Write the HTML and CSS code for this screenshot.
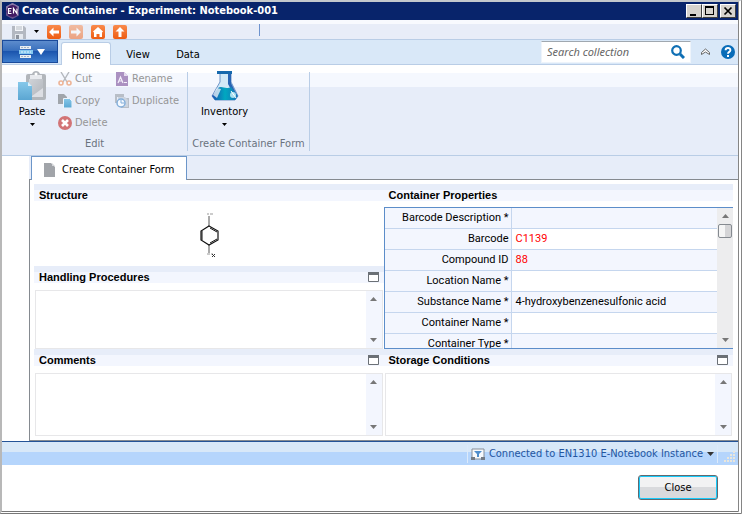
FILE: index.html
```html
<!DOCTYPE html>
<html lang="en">
<head>
<meta charset="utf-8">
<title>Create Container - Experiment: Notebook-001</title>
<link rel="stylesheet" href="styles.css">
</head>
<body>
<svg class="defs" aria-hidden="true">
  <defs>
    <linearGradient id="orange" x1="0" y1="0" x2="0" y2="1"><stop offset="0" stop-color="#f98a4c"/><stop offset="1" stop-color="#ee5c12"/></linearGradient>
    <linearGradient id="sheet" x1="0" y1="0" x2="0" y2="1"><stop offset="0" stop-color="#86c8ea"/><stop offset="1" stop-color="#5ba6d2"/></linearGradient>
    <linearGradient id="board" x1="0" y1="0" x2="1" y2="1"><stop offset="0" stop-color="#d0d3d8"/><stop offset="1" stop-color="#b2b6bc"/></linearGradient>
    <linearGradient id="liquid" x1="0" y1="0" x2="1" y2="0"><stop offset="0" stop-color="#1c50b0"/><stop offset=".5" stop-color="#00a8c0"/><stop offset="1" stop-color="#1870b8"/></linearGradient>
    <symbol id="up" viewBox="0 0 7 4"><path d="M0 4 3.5 0 7 4z"/></symbol>
    <symbol id="down" viewBox="0 0 7 4"><path d="M0 0h7L3.500 4z"/></symbol>
    <symbol id="restore" viewBox="0 0 11 10"><path d="M.5.500h10v9H.5z" fill="#fff" stroke="#6b7076"/><path d="M0 0h11v3H0z" fill="#6b7076"/></symbol>
  </defs>
</svg>
<div class="window">
  <header class="titlebar">
    <svg class="logo" viewBox="0 0 15 16" aria-hidden="true"><path d="M7.500 0 14 3.500v9L7.500 16 1 12.500v-9z" fill="#67548f"/><path d="M7.500 0 14 3.500v4.500H1V3.500z" fill="#8a7aaa"/><circle cx="7.500" cy="8" r="6" fill="#421a63"/><path d="M6.500 5.500h-3v5h3M3.500 8h2.500M8.500 10.500v-5l3.500 5v-5" fill="none" stroke="#fff" stroke-width="1.200"/></svg>
    <h1>Create Container - Experiment: Notebook-001</h1>
    <div class="caption">
      <button type="button" aria-label="Minimize"><svg viewBox="0 0 14 12"><path d="M3 9h6v2H3z"/></svg></button>
      <button type="button" aria-label="Maximize"><svg viewBox="0 0 14 12"><path d="M2 1h9v9H2zM3 3v6h7V3z" fill-rule="evenodd"/></svg></button>
      <button type="button" class="close-x" aria-label="Close window"><svg viewBox="0 0 14 12"><path d="m3.500 2.500 7 7m0-7-7 7" stroke="#000" stroke-width="1.700"/></svg></button>
    </div>
  </header>

  <div class="quickbar">
    <button type="button" aria-label="Save"><svg class="i14" viewBox="0 0 14 14"><path d="M0 1h12l2 2v11H0z" fill="#b3b8c1"/><path d="M3 0h8v6H3z" fill="#f4f6fa"/><path d="M4 2h6M4 4h6" stroke="#b4bac2"/><path d="M3 9h8v5H3z" fill="#e4e8ee"/><path d="M4 10h3v4H4z" fill="#8e949e"/></svg></button>
    <button type="button" class="drop" aria-label="Save options"><svg viewBox="0 0 5 3"><path d="M0 0h5L2.500 3z"/></svg></button>
    <button type="button" aria-label="Back"><svg class="i14" viewBox="0 0 14 14"><rect width="14" height="14" rx="2" fill="url(#orange)"/><path d="M2 7l4.500-4.500V5.500H12v3H6.500v3z" fill="#fff"/></svg></button>
    <button type="button" aria-label="Forward" class="faded"><svg class="i14" viewBox="0 0 14 14"><rect width="14" height="14" rx="2" fill="url(#orange)"/><path d="M12 7 7.500 2.500V5.500H2v3h5.500v3z" fill="#fff"/></svg></button>
    <button type="button" aria-label="Home"><svg class="i14" viewBox="0 0 14 14"><rect width="14" height="14" rx="2" fill="url(#orange)"/><path d="M7 2l5 4.500-1 1V12H8.500V9h-3v3H3V7.500l-1-1z" fill="#fff"/></svg></button>
    <button type="button" aria-label="Up"><svg class="i14" viewBox="0 0 14 14"><rect width="14" height="14" rx="2" fill="url(#orange)"/><path d="M7 2l4.500 4.500H8.500V12h-3V6.500h-3z" fill="#fff"/></svg></button>
    <span class="grip"></span>
  </div>

  <nav class="tabs">
    <button type="button" class="appmenu" aria-label="Application menu">
      <svg class="appicon" viewBox="0 0 14 12"><path d="M1 0h11v3H1zM1 9h11v3H1z" fill="#e8edf2"/><path d="M2 1.500h9M2 10.500h9" stroke="#a4b4c4" stroke-dasharray="2 1"/><path d="M0 4h14v4H0z" fill="#86c8f0"/><path d="M2 6h10" stroke="#e4f5ff" stroke-dasharray="2 1"/></svg>
      <svg class="apparrow" viewBox="0 0 8 6"><path d="M0 0h8L4 6z" fill="#fff"/></svg>
    </button>
    <button type="button" class="tab active">Home</button>
    <button type="button" class="tab">View</button>
    <button type="button" class="tab">Data</button>
    <div class="tools">
      <div class="search">
        <input type="text" placeholder="Search collection" aria-label="Search collection">
        <button type="button" aria-label="Search"><svg viewBox="0 0 14 14"><circle cx="5.500" cy="5.500" r="4.300" fill="#fff" stroke="#0f6fb4" stroke-width="2.200"/><path d="m9 9 4 4" stroke="#0f6fb4" stroke-width="3"/></svg></button>
      </div>
      <button type="button" class="collapse" aria-label="Collapse ribbon"><svg viewBox="0 0 9 8"><path d="M.5 4.500 4.500 1l4 3.500v2L4.500 4 .5 6.500z" fill="#fff" stroke="#666"/></svg></button>
      <button type="button" class="help" aria-label="Help"><svg viewBox="0 0 14 14"><circle cx="7" cy="7" r="7" fill="#086cb8"/><path d="M4.600 5.300C4.600 2.300 9.400 2.300 9.400 5.200 9.400 7 7 6.800 7 8.800" fill="none" stroke="#fff" stroke-width="1.900"/><path d="M6 10h2v2H6z" fill="#fff"/></svg></button>
    </div>
  </nav>

  <div class="ribbon">
    <section class="group edit">
      <div class="commands">
        <button type="button" class="big">
          <svg viewBox="0 0 28 30"><path d="M10 3h4q1-3 4-3t4 3h4q2 0 2 2v22q0 2-2 2H10q-2 0-2-2V5q0-2 2-2z" fill="#b2b6bb"/><path d="M11 8h14v18H11z" fill="#dcdee3"/><path d="M11 8h14v9L14 25h-3z" fill="url(#board)"/><path d="M12 4h12v4H12z" fill="#e8eaee"/><circle cx="18" cy="3" r="1.500" fill="#fff"/><path d="M0 11h10l4 4v14H0z" fill="url(#sheet)"/><path d="M10 11v4h4z" fill="#dcf0fa"/></svg>
          <span>Paste</span>
          <svg class="caret" viewBox="0 0 5 3"><path d="M0 0h5L2.500 3z"/></svg>
        </button>
        <div class="column first">
          <button type="button" disabled><svg viewBox="0 0 14 14"><path d="m3 0 6 10M11 0 5 10" stroke="#b4b8bd" stroke-width="1.400"/><circle cx="3" cy="11" r="2" fill="none" stroke="#edb497" stroke-width="1.600"/><circle cx="11" cy="11" r="2" fill="none" stroke="#edb497" stroke-width="1.600"/></svg>Cut</button>
          <button type="button" disabled><svg viewBox="0 0 14 14"><path d="M0 0h6l3 3v7H0z" fill="#a0a5ab"/><path d="M5.500 4.500h6l2.500 2.500v7H5.500z" fill="url(#sheet)" stroke="#edf4fb"/></svg>Copy</button>
          <button type="button" disabled><svg viewBox="0 0 14 14"><circle cx="7" cy="7" r="7" fill="#d27476"/><path d="m4 4 6 6m0-6-6 6" stroke="#fff" stroke-width="2.600"/></svg>Delete</button>
        </div>
        <div class="column">
          <button type="button" disabled><svg viewBox="0 0 14 14"><path d="M1 0h8l4 4v10H1z" fill="#ab91c1"/><path d="M9 0v4h4z" fill="#e5dced"/><path d="m3 11 2.500-6L8 11M4 9h3M9 10.500h3" fill="none" stroke="#f4effa" stroke-width="1.200"/></svg>Rename</button>
          <button type="button" disabled><svg viewBox="0 0 14 14"><path d="M0 0h9v3H2v6H0zM9 4h5v10H6V11h5z" fill="#b8bec7"/><path d="M3 3h7l3 3v7H3z" fill="#ccd4df"/><circle cx="6" cy="9" r="4" fill="#f4f9ff" stroke="#83aeda" stroke-width="1.500"/><path d="M6 6v3h3" fill="none" stroke="#83aeda"/></svg>Duplicate</button>
        </div>
      </div>
      <h2>Edit</h2>
    </section>
    <section class="group form">
      <div class="commands">
        <button type="button" class="big">
          <svg viewBox="0 0 28 30"><path d="M9 2h11v9l7 14-3 4H4l-3-4 8-14z" fill="#d2e9f7" stroke="#6d94c8"/><path d="M6 0h15v3H6z" fill="#1669ad"/><path d="M17 3h3v9l6 12-2 2-7-13z" fill="#2865b4"/><path d="M7 17c4-3 7 2 13-1l7 9-3 4H4l-3-4z" fill="url(#liquid)"/><path d="m2 24 4-7 4 1-4 9z" fill="#fff" opacity=".7"/><circle cx="22" cy="24" r="3" fill="#a9e0f0"/><path d="m20 20 5 7" stroke="#fff"/></svg>
          <span>Inventory</span>
          <svg class="caret" viewBox="0 0 5 3"><path d="M0 0h5L2.500 3z"/></svg>
        </button>
      </div>
      <h2>Create Container Form</h2>
    </section>
  </div>

  <main class="workspace">
    <div class="doctabs">
      <button type="button" class="doctab"><svg viewBox="0 0 11 14"><path d="M0 0h7l4 4v10H0z" fill="#a1a4a9"/><path d="M8 0v3h3z" fill="#d5d7da"/></svg>Create Container Form</button>
    </div>
    <div class="sheet">
      <div class="left">
        <section class="panel structure">
          <h3>Structure</h3>
          <svg class="molecule" viewBox="0 0 24 50" role="img" aria-label="4-hydroxybenzenesulfonic acid"><path d="M12 5v10M12 34v8" stroke="#555"/><path d="m12 15 9 5v9l-9 5-8-5v-9z" fill="none" stroke="#111" stroke-width="1.200"/><path d="m13 17 7 4M5 20v9M13 32l7-4" stroke="#111"/><path d="M10 3h2M13 3h3M10 43h3M14 43h2" stroke="#999"/><path d="m15 43 3 3m0-3-3 3" stroke="#333"/></svg>
        </section>
        <section class="panel">
          <h3><label for="handling">Handling Procedures</label><button type="button" aria-label="Expand Handling Procedures"><svg><use href="#restore"/></svg></button></h3>
          <div class="memo"><textarea id="handling"></textarea><span class="scroll"><svg><use href="#up"/></svg><svg><use href="#down"/></svg></span></div>
        </section>
      </div>
      <section class="panel properties">
        <h3>Container Properties</h3>
        <div class="gridbox">
          <div class="rows">
            <table>
              <tr><th scope="row">Barcode Description *</th><td></td></tr>
              <tr><th scope="row">Barcode</th><td class="auto">C1139</td></tr>
              <tr><th scope="row">Compound ID</th><td class="auto">88</td></tr>
              <tr><th scope="row">Location Name *</th><td></td></tr>
              <tr><th scope="row">Substance Name *</th><td>4-hydroxybenzenesulfonic acid</td></tr>
              <tr><th scope="row">Container Name *</th><td></td></tr>
              <tr><th scope="row">Container Type *</th><td></td></tr>
            </table>
          </div>
          <span class="scroll"><svg><use href="#up"/></svg><i class="thumb"></i><svg><use href="#down"/></svg></span>
        </div>
      </section>
      <section class="panel">
        <h3><label for="comments">Comments</label><button type="button" aria-label="Expand Comments"><svg><use href="#restore"/></svg></button></h3>
        <div class="memo"><textarea id="comments"></textarea><span class="scroll"><svg><use href="#up"/></svg><svg><use href="#down"/></svg></span></div>
      </section>
      <section class="panel">
        <h3><label for="storage">Storage Conditions</label><button type="button" aria-label="Expand Storage Conditions"><svg><use href="#restore"/></svg></button></h3>
        <div class="memo"><textarea id="storage"></textarea><span class="scroll"><svg><use href="#up"/></svg><svg><use href="#down"/></svg></span></div>
      </section>
    </div>
  </main>

  <div class="status">
    <button type="button" class="connection">
      <svg class="net" viewBox="0 0 14 12"><path d="M1 1h12v10H1z" fill="#f7f9fc" stroke="#868e98"/><path d="M0 9h4v3H0zM10 9h4v3h-4z" fill="#747b85"/><path d="M3 3h8L8 6v3H6V6z" fill="#4e8dcc"/></svg>
      <span>Connected to EN1310 E-Notebook Instance</span>
      <svg class="arrow"><use href="#down"/></svg>
    </button>
    <svg class="resize" viewBox="0 0 11 11" aria-hidden="true"><path d="M9 1h2M6 4h2M9 4h2M3 7h2M6 7h2M9 7h2M0 10h2M3 10h2M6 10h2M9 10h2" stroke="#e9e6dc" stroke-width="2"/></svg>
  </div>

  <footer class="actions"><button type="button">Close</button></footer>
</div>
</body>
</html>
```

FILE: styles.css
```css
* { box-sizing: border-box; }

body {
  margin: 0;
  font: 11px/14px "DejaVu Sans Condensed", "Noto Sans", sans-serif;
  color: #000;
}

button, input, textarea { font: inherit; color: inherit; }

button {
  display: flex;
  align-items: center;
  padding: 0;
  border: 0;
  background: none;
}

svg { display: block; flex: none; }
.defs { position: absolute; width: 0; height: 0; }
h1, h2, h3 { margin: 0; font-size: 11px; }

.window {
  display: flex;
  flex-direction: column;
  min-height: 100vh;
  border: 2px solid #b8b8b8;
  border-top-color: #c4c8cc;
  border-right: 4px double #858585;
  border-bottom: 3px double #777;
  background: #fff;
}

/* Title bar */
.titlebar {
  display: flex;
  align-items: center;
  height: 18px;
  padding: 0 2px 0 3px;
  background: #08246b;
  color: #fff;
}
.logo { width: 15px; height: 16px; }
.titlebar h1 { flex: 1; margin-left: 2px; }
.caption { display: flex; }
.caption button {
  width: 16px;
  height: 14px;
  border: 1px solid;
  border-color: #fff #404040 #404040 #fff;
  background: #d6d3ce;
}
.caption svg { width: 14px; height: 12px; }
.caption .close-x { margin-left: 2px; }

/* Quick access */
.quickbar {
  display: flex;
  align-items: center;
  gap: 8px;
  height: 20px;
  padding-left: 10px;
  border-top: 4px solid #f8fafe;
  border-bottom: 1px solid #b9cde6;
  background: #e8edf8;
}
.i14 { width: 14px; height: 14px; }
.drop svg { width: 5px; height: 3px; }
.faded { opacity: .5; }
.grip { width: 1px; height: 12px; margin: 0 0 4px 124px; background: #6d93ce; }

/* Ribbon tabs */
.tabs {
  display: flex;
  height: 25px;
  border-bottom: 1px solid #b9cde6;
  background: #d9e8f8;
}
.appmenu {
  gap: 4px;
  width: 56px;
  height: 23px;
  margin-right: 3px;
  padding-left: 16px;
  border: 1px solid #1b4b9b;
  background: linear-gradient(#5d8ccd, #3a70bd 45%, #1b55ae 50%, #3e7dcd);
}
.appicon { width: 14px; height: 12px; }
.apparrow { width: 8px; height: 6px; }
.tab {
  justify-content: center;
  height: 24px;
  min-width: 50px;
  padding-top: 5px;
}
.tab.active {
  margin: 2px 2px -1px 0;
  padding-top: 2px;
  border: 1px solid #b9cde6;
  border-bottom: 0;
  border-radius: 3px 3px 0 0;
  background: #fff;
}
.tools {
  display: flex;
  align-items: center;
  margin-left: auto;
  padding-right: 3px;
}
.search {
  display: flex;
  align-items: center;
  width: 150px;
  height: 22px;
  padding: 0 5px;
  border: 1px solid #eef4fb;
  border-top-color: #a0a8b0;
  background: #fff;
}
.search input {
  flex: 1;
  min-width: 0;
  padding: 0;
  border: 0;
  outline: 0;
  background: none;
  font: italic 11px/14px "Noto Sans", sans-serif;
}
.search input::placeholder { color: #666; opacity: 1; }
.search svg, .help svg { width: 14px; height: 14px; }
.collapse { margin: 0 11px 0 10px; }
.collapse svg { width: 9px; height: 8px; }

/* Ribbon body */
.ribbon {
  display: flex;
  height: 91px;
  padding-top: 7px;
  border-bottom: 1px solid #b9cde6;
  background: linear-gradient(#fff 8px, #f5f8fe 8px 22px, #e7edf9 22px);
}
.group {
  display: flex;
  flex-direction: column;
  justify-content: space-between;
  height: 79px;
  border-right: 1px solid #b9cde6;
}
.group.edit { width: 186px; }
.group.form { width: 122px; }
.group h2 { color: #69727e; font-weight: 400; text-align: center; white-space: nowrap; }
.commands { display: flex; }
.edit .commands { padding-left: 15px; gap: 11px; }
.form .commands { justify-content: center; padding-right: 48px; }
.big { flex-direction: column; width: 30px; margin-top: -1px; }
.big > svg:first-child { width: 28px; height: 30px; }
.big span { margin-top: 4px; }
.big .caret { width: 5px; height: 3px; margin-top: 4px; }
.column { display: flex; flex-direction: column; gap: 8px; }
.column button { gap: 3px; color: #969696; }
.column svg { width: 14px; height: 14px; }
.column.first { width: 46px; }

/* Document area */
.workspace { flex: 1; display: flex; flex-direction: column; padding-left: 27px; }
.doctabs { display: flex; height: 23px; background: #e7edf9; }
.doctab {
  position: relative;
  gap: 7px;
  height: 24px;
  margin-left: 2px;
  padding: 2px 12px 0;
  border: 1px solid #6c96c9;
  border-bottom: 0;
  background: #fff;
}
.doctab svg { width: 11px; height: 14px; }
.sheet {
  flex: 1;
  display: grid;
  grid-template-columns: 1fr 1fr;
  grid-template-rows: 165px minmax(87px, 1fr);
  padding: 4px 5px 4px 4px;
  border: solid #858a90;
  border-width: 1px 0 1px 1px;
}
.left { display: grid; grid-template-rows: 82px 83px; }
.panel { display: flex; flex-direction: column; min-width: 0; min-height: 0; }
.panel h3 {
  display: flex;
  justify-content: space-between;
  height: 17px;
  padding: 4px 5px 0;
  background: linear-gradient(#e7edf9 6px, #f3f6fe 6px);
  font: bold 11px/14px "Liberation Sans", Arial, sans-serif;
}
.panel h3 svg { width: 11px; height: 10px; }
.molecule { width: 24px; height: 50px; margin: 10px auto 0; }
.memo {
  flex: 1;
  display: flex;
  min-height: 0;
  margin: 7px 1px 0;
  border: 1px solid #e7e7e9;
}
.memo textarea {
  flex: 1;
  min-width: 0;
  resize: none;
  padding: 3px;
  border: 0;
  outline: 0;
  overflow: hidden;
  background: #fff;
}
.scroll {
  display: flex;
  flex-direction: column;
  align-items: center;
  width: 16px;
  padding: 6px 0;
  background: #f3f6fe;
  fill: #777;
}
.scroll svg, .arrow { width: 7px; height: 4px; }
.scroll svg:last-child { margin-top: auto; }

.gridbox {
  flex: 1;
  display: flex;
  min-height: 0;
  margin-top: 6px;
  border: 1px solid #5c8dc9;
  border-right: 0;
}
.rows { flex: 1; overflow: hidden; }
.gridbox .scroll { background: #ededee; }
.thumb {
  width: 14px;
  height: 14px;
  margin-top: 6px;
  border: 1px solid #858a90;
  border-radius: 2px;
  background: linear-gradient(90deg, #f5f5f5 50%, #d5d5d7 50%);
}
table {
  width: 100%;
  border-spacing: 0;
  table-layout: fixed;
  font-family: Roboto, sans-serif;
}
th, td { height: 21px; padding: 0 2px 0 4px; border-bottom: 1px solid #c5d6ee; }
th { width: 127px; border-right: 1px solid #c5d6ee; background: #f3f6fe; font-weight: 400; text-align: right; white-space: nowrap; }
tr:nth-child(odd) td { background: #f3f6fe; }
.auto { color: #f00; }

/* Status and actions */
.status {
  display: flex;
  align-items: center;
  justify-content: flex-end;
  height: 24px;
  border-top: 1px solid #245397;
  background: linear-gradient(#d8e8f8 10px, #b5d5fc 10px);
}
.connection {
  gap: 4px;
  height: 18px;
  padding: 0 3px;
  border: solid #dceafa;
  border-width: 0 1px;
  color: #2456a0;
}
.net { width: 14px; height: 12px; }
.arrow { fill: #333; }
.resize { width: 11px; height: 11px; margin: 6px 3px 0 6px; }
.actions { display: flex; justify-content: flex-end; height: 46px; padding: 10px 20px 0 0; }
.actions button {
  justify-content: center;
  width: 80px;
  height: 25px;
  border: 1px solid #606a70;
  border-radius: 3px;
  box-shadow: inset 0 0 0 1px #18cafa;
  background: linear-gradient(#f2f2f3 50%, #d9dadd 50%);
}
```
